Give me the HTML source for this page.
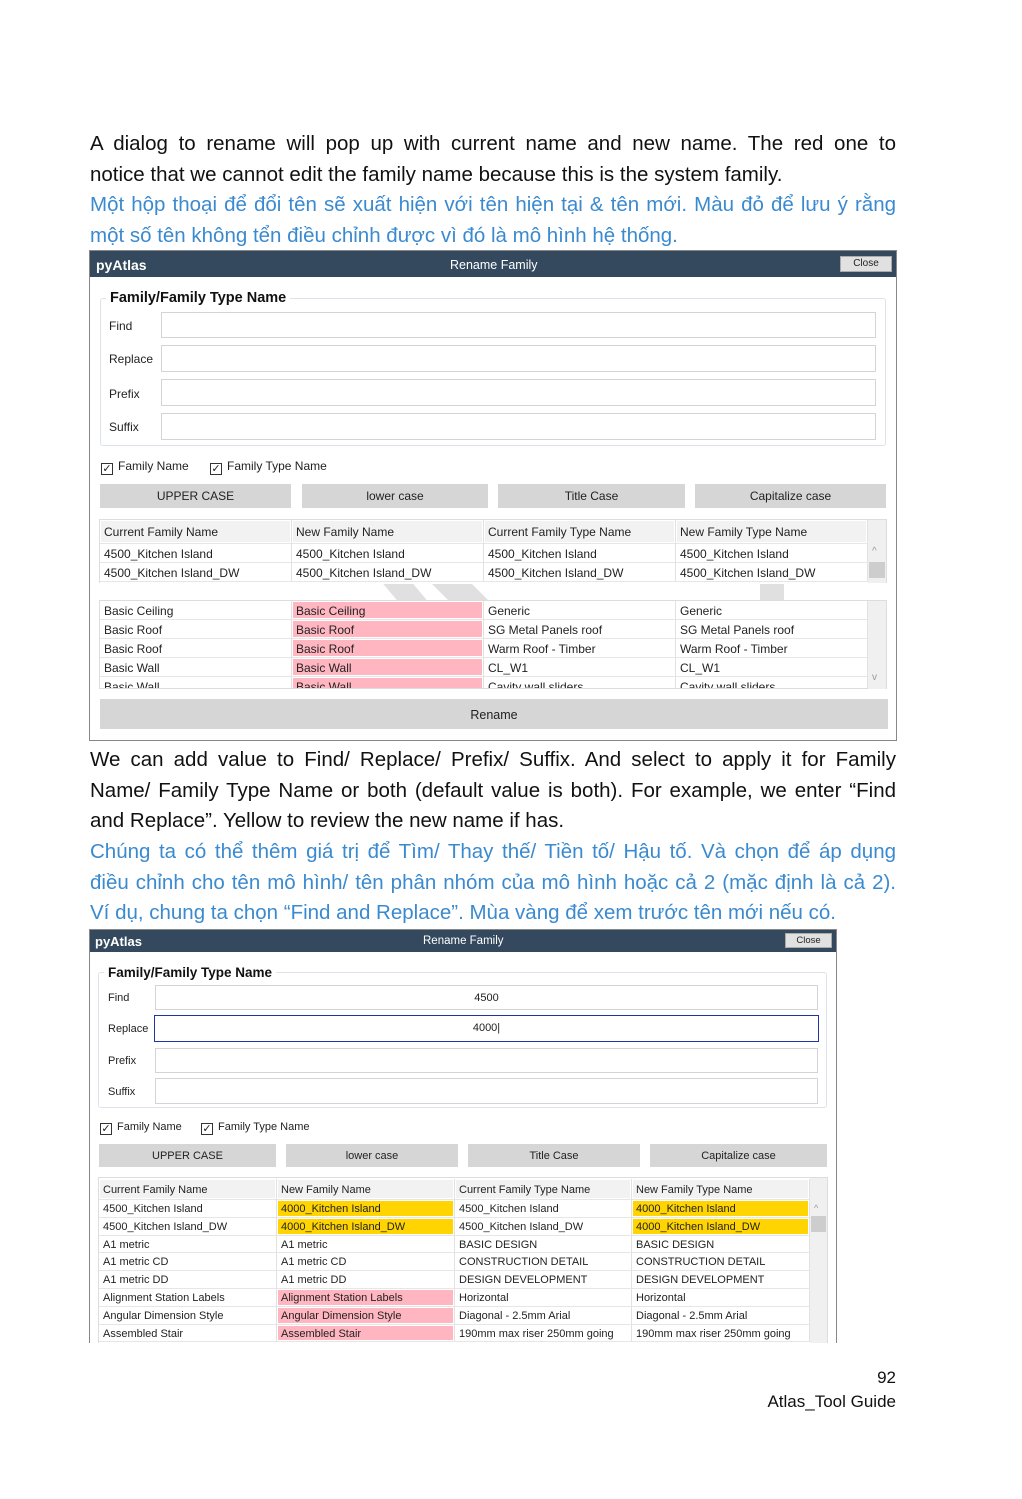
<!DOCTYPE html>
<html><head><meta charset="utf-8"><style>
*{margin:0;padding:0;box-sizing:border-box}
body{width:1022px;height:1499px;background:#fff;position:relative;overflow:hidden;font-family:"Liberation Sans",sans-serif}
.a{position:absolute}
.p{position:absolute;left:90px;width:806px;font-size:20.5px;line-height:31px;white-space:nowrap;text-align:justify;text-align-last:justify}
.p.l{text-align-last:left}
.blk{color:#111}
.blu{color:#3a8ad0}
.ui{font-family:"Liberation Sans Narrow","Liberation Sans",sans-serif;color:#222}
.tb{background:#34495e;color:#fff}
.inp{position:absolute;border:1px solid #d4d4d4;background:#fff}
.btn{position:absolute;background:#d6d6d6;text-align:center;color:#222}
.cell{position:absolute;white-space:nowrap;overflow:hidden;border-right:1px solid #e2e2e2;border-bottom:1px solid #e6e6e6;padding-left:4px}
.cb{display:inline-block;width:12px;height:12px;border:1px solid #333;vertical-align:-2px;font-size:11px;line-height:10px;text-align:center;margin-right:5px}
</style></head><body>

<div class="p blk" style="top:128px">A dialog to rename will pop up with current name and new name. The red one to</div>
<div class="p blk l" style="top:159px">notice that we cannot edit the family name because this is the system family.</div>
<div class="p blu" style="top:189px">Một hộp thoại để đổi tên sẽ xuất hiện với tên hiện tại &amp; tên mới. Màu đỏ để lưu ý rằng</div>
<div class="p blu l" style="top:220px">một số tên không tển điều chỉnh được vì đó là mô hình hệ thống.</div>

<!-- Dialog 1 -->
<div class="a ui" style="left:89px;top:250px;width:808px;height:491px;border:1px solid #888;background:#fff"></div>
<div class="a ui tb" style="left:90px;top:251px;width:806px;height:26px"></div>
<div class="a ui" style="left:96px;top:257px;font-size:14px;font-weight:bold;color:#fff">pyAtlas</div>
<div class="a ui" style="left:450px;top:258px;font-size:12.5px;color:#fff">Rename Family</div>
<div class="a ui" style="left:840px;top:256px;width:52px;height:16px;background:#e1e1e1;border:1px solid #aaa;font-size:10px;text-align:center;line-height:14px">Close</div>
<div class="a" style="left:100px;top:298px;width:786px;height:148px;border:1px solid #dde3ea;border-radius:3px"></div>
<div class="a ui" style="left:106px;top:290px;background:#fff;padding:0 4px;font-size:14.5px;font-weight:bold;color:#111">Family/Family Type Name</div>
<div class="a ui" style="left:109px;top:319px;font-size:12px">Find</div>
<div class="a ui" style="left:109px;top:352px;font-size:12px">Replace</div>
<div class="a ui" style="left:109px;top:387px;font-size:12px">Prefix</div>
<div class="a ui" style="left:109px;top:420px;font-size:12px">Suffix</div>
<div class="inp" style="left:161px;top:312px;width:715px;height:26px"></div>
<div class="inp" style="left:161px;top:345px;width:715px;height:27px"></div>
<div class="inp" style="left:161px;top:379px;width:715px;height:27px"></div>
<div class="inp" style="left:161px;top:413px;width:715px;height:27px"></div>
<div class="a ui" style="left:101px;top:459px;font-size:12px"><span class="cb">✓</span>Family Name</div>
<div class="a ui" style="left:210px;top:459px;font-size:12px"><span class="cb">✓</span>Family Type Name</div>
<div class="btn ui" style="left:100px;top:484px;width:191px;height:24px;font-size:12px;line-height:25px">UPPER CASE</div>
<div class="btn ui" style="left:302px;top:484px;width:186px;height:24px;font-size:12px;line-height:25px">lower case</div>
<div class="btn ui" style="left:498px;top:484px;width:187px;height:24px;font-size:12px;line-height:25px">Title Case</div>
<div class="btn ui" style="left:695px;top:484px;width:191px;height:24px;font-size:12px;line-height:25px">Capitalize case</div>
<!-- table1 -->
<div class="a" style="left:99px;top:519px;width:788px;height:64px;border:1px solid #ddd;border-bottom:none"></div>
<div class="a" style="left:868px;top:520px;width:18px;height:63px;background:#f0f0f0"></div>
<div class="a" style="left:869px;top:562px;width:16px;height:16px;background:#cdcdcd"></div>
<div class="a ui" style="left:872px;top:546px;font-size:10px;color:#999">^</div>
<div id="t1"></div>
<div class="a" style="left:390px;top:584px;width:30px;height:16px;background:#e0e0e0;transform:skewX(40deg)"></div>
<div class="a" style="left:440px;top:584px;width:40px;height:16px;background:#e0e0e0;transform:skewX(45deg)"></div>
<div class="a" style="left:760px;top:584px;width:24px;height:16px;background:#e0e0e0"></div>
<div class="a" style="left:99px;top:600px;width:788px;height:89px;border:1px solid #ddd;background:#fff"></div>
<div class="a" style="left:868px;top:601px;width:18px;height:88px;background:#f0f0f0"></div>
<div class="a ui" style="left:872px;top:672px;font-size:10px;color:#999">v</div>
<div class="a" style="left:0;top:601px;width:868px;height:87px;overflow:hidden"><div class="a" style="left:0;top:-601px;width:900px;height:700px"><div id="t2"></div></div></div>
<div class="btn ui" style="left:100px;top:699px;width:788px;height:30px;font-size:12.5px;line-height:32px">Rename</div>

<div class="p blk" style="top:744px">We can add value to Find/ Replace/ Prefix/ Suffix. And select to apply it for Family</div>
<div class="p blk" style="top:775px">Name/ Family Type Name or both (default value is both). For example, we enter “Find</div>
<div class="p blk l" style="top:805px">and Replace”. Yellow to review the new name if has.</div>
<div class="p blu" style="top:836px">Chúng ta có thể thêm giá trị để Tìm/ Thay thế/ Tiền tố/ Hậu tố. Và chọn để áp dụng</div>
<div class="p blu" style="top:867px">điều chỉnh cho tên mô hình/ tên phân nhóm của mô hình hoặc cả 2 (mặc định là cả 2).</div>
<div class="p blu l" style="top:897px">Ví dụ, chung ta chọn “Find and Replace”. Mùa vàng để xem trước tên mới nếu có.</div>

<!-- Dialog 2 -->
<div class="a" style="left:89px;top:929px;width:748px;height:414px;border:1px solid #888;border-bottom:none;background:#fff"></div>
<div class="a tb" style="left:90px;top:930px;width:746px;height:22px"></div>
<div class="a ui" style="left:95px;top:934px;font-size:13px;font-weight:bold;color:#fff">pyAtlas</div>
<div class="a ui" style="left:423px;top:935px;font-size:11.5px;color:#fff">Rename Family</div>
<div class="a ui" style="left:785px;top:933px;width:47px;height:15px;background:#e1e1e1;border:1px solid #aaa;font-size:9.5px;text-align:center;line-height:13px">Close</div>
<div class="a" style="left:98px;top:972px;width:729px;height:136px;border:1px solid #dde3ea;border-radius:3px"></div>
<div class="a ui" style="left:104px;top:965px;background:#fff;padding:0 4px;font-size:13.5px;font-weight:bold;color:#111">Family/Family Type Name</div>
<div class="a ui" style="left:108px;top:992px;font-size:11px">Find</div>
<div class="a ui" style="left:108px;top:1023px;font-size:11px">Replace</div>
<div class="a ui" style="left:108px;top:1055px;font-size:11px">Prefix</div>
<div class="a ui" style="left:108px;top:1086px;font-size:11px">Suffix</div>
<div class="inp ui" style="left:155px;top:985px;width:663px;height:25px;text-align:center;font-size:11px;line-height:25px">4500</div>
<div class="inp ui" style="left:154px;top:1015px;width:665px;height:27px;border:1.5px solid #2233aa;text-align:center;font-size:11px;line-height:25px">4000|</div>
<div class="inp" style="left:155px;top:1048px;width:663px;height:25px"></div>
<div class="inp" style="left:155px;top:1078px;width:663px;height:26px"></div>
<div class="a ui" style="left:100px;top:1121px;font-size:11px"><span class="cb">✓</span>Family Name</div>
<div class="a ui" style="left:201px;top:1121px;font-size:11px"><span class="cb">✓</span>Family Type Name</div>
<div class="btn ui" style="left:99px;top:1144px;width:177px;height:23px;font-size:11px;line-height:24px">UPPER CASE</div>
<div class="btn ui" style="left:286px;top:1144px;width:172px;height:23px;font-size:11px;line-height:25px">lower case</div>
<div class="btn ui" style="left:468px;top:1144px;width:172px;height:23px;font-size:11px;line-height:24px">Title Case</div>
<div class="btn ui" style="left:650px;top:1144px;width:177px;height:23px;font-size:11px;line-height:24px">Capitalize case</div>
<div class="a" style="left:98px;top:1177px;width:730px;height:166px;border:1px solid #ddd;border-bottom:none"></div>
<div class="a" style="left:810px;top:1178px;width:17px;height:165px;background:#f0f0f0"></div>
<div class="a" style="left:811px;top:1216px;width:15px;height:16px;background:#cdcdcd"></div>
<div class="a ui" style="left:814px;top:1203px;font-size:9px;color:#999">^</div>
<div id="t3"></div>

<div class="a" style="left:700px;top:1368px;width:196px;text-align:right;font-size:17px;color:#111">92</div>
<div class="a" style="left:700px;top:1392px;width:196px;text-align:right;font-size:17px;color:#111">Atlas_Tool Guide</div>

<script>
function tbl(id,xs,y0,hs,rows,fs){
  var h='';
  var y=y0;
  rows.forEach(function(r,ri){
    var hh=hs[ri]!==undefined?hs[ri]:hs[hs.length-1];
    for(var c=0;c<4;c++){
      var t=r[c],bg='#fff';
      if(typeof t==='object'){bg=t[1];t=t[0];}
      if(ri===0&&r.hdr)bg='#f2f2f2';
      var w=xs[c+1]-xs[c];
      h+='<div class="cell ui" style="left:'+xs[c]+'px;top:'+y+'px;width:'+w+'px;height:'+hh+'px;line-height:'+(hh+1)+'px;font-size:'+fs+'px;">'+(bg!=='#fff'?'<div style="position:absolute;left:1px;top:1px;right:1px;bottom:1px;background:'+bg+'"></div>':'')+'<span style="position:relative">'+t+'</span></div>';
    }
    y+=hh;
  });
  document.getElementById(id).outerHTML=h;
}
var R='#ffb6c1',Y='#ffd400';
var hd=['Current Family Name','New Family Name','Current Family Type Name','New Family Type Name'];hd.hdr=1;
var x1=[100,292,484,676,868];
tbl('t1',x1,520,[24,19,19],[hd,['4500_Kitchen Island','4500_Kitchen Island','4500_Kitchen Island','4500_Kitchen Island'],['4500_Kitchen Island_DW','4500_Kitchen Island_DW','4500_Kitchen Island_DW','4500_Kitchen Island_DW']],12);
tbl('t2',x1,601,[19],[
['Basic Ceiling',['Basic Ceiling',R],'Generic','Generic'],
['Basic Roof',['Basic Roof',R],'SG Metal Panels roof','SG Metal Panels roof'],
['Basic Roof',['Basic Roof',R],'Warm Roof - Timber','Warm Roof - Timber'],
['Basic Wall',['Basic Wall',R],'CL_W1','CL_W1'],
['Basic Wall',['Basic Wall',R],'Cavity wall sliders','Cavity wall sliders']],12);
var hd2=hd.slice();hd2.hdr=1;
tbl('t3',[99,277,455,632,810],1179,[21,17.8],[hd2,
['4500_Kitchen Island',['4000_Kitchen Island',Y],'4500_Kitchen Island',['4000_Kitchen Island',Y]],
['4500_Kitchen Island_DW',['4000_Kitchen Island_DW',Y],'4500_Kitchen Island_DW',['4000_Kitchen Island_DW',Y]],
['A1 metric','A1 metric','BASIC DESIGN','BASIC DESIGN'],
['A1 metric CD','A1 metric CD','CONSTRUCTION DETAIL','CONSTRUCTION DETAIL'],
['A1 metric DD','A1 metric DD','DESIGN DEVELOPMENT','DESIGN DEVELOPMENT'],
['Alignment Station Labels',['Alignment Station Labels',R],'Horizontal','Horizontal'],
['Angular Dimension Style',['Angular Dimension Style',R],'Diagonal - 2.5mm Arial','Diagonal - 2.5mm Arial'],
['Assembled Stair',['Assembled Stair',R],'190mm max riser 250mm going','190mm max riser 250mm going']],11);
</script>
</body></html>
